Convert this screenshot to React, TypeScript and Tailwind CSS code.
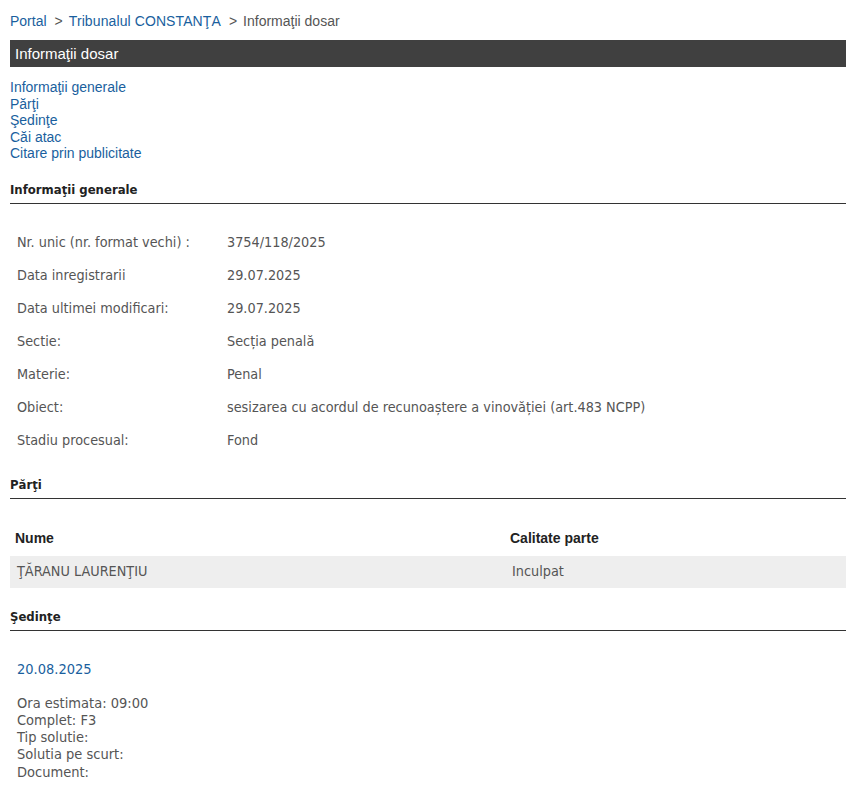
import React from 'react'

const tahoma = "font-['DejaVu_Sans_Condensed',sans-serif]"
const arial = "font-['Liberation_Sans',Arial,sans-serif]"

const general: [string, string][] = [
  ['Nr. unic (nr. format vechi) :', '3754/118/2025'],
  ['Data inregistrarii', '29.07.2025'],
  ['Data ultimei modificari:', '29.07.2025'],
  ['Sectie:', 'Secția penală'],
  ['Materie:', 'Penal'],
  ['Obiect:', 'sesizarea cu acordul de recunoaștere a vinovăției (art.483 NCPP)'],
  ['Stadiu procesual:', 'Fond'],
]

function SectionTitle({ children }: { children: React.ReactNode }) {
  return (
    <div className={`${tahoma} font-bold text-[13px] leading-[16px] text-[#222] border-b border-[#333] pb-[5px]`}>
      {children}
    </div>
  )
}

export default function App() {
  return (
    <div className={`${arial} bg-white w-[855px] min-h-[795px] pl-[10px] pr-[9px] pt-[12px] text-[14px]`}>
      {/* breadcrumb */}
      <div className="leading-[18px] text-[#555]">
        <a className="text-[#1a5f9e]">Portal</a>
        <span className="ml-[8px] mr-[6px]">&gt;</span>
        <a className="text-[#1a5f9e] tracking-[0.1px]">Tribunalul CONSTANŢA</a>
        <span className="ml-[8px] mr-[6px]">&gt;</span>
        <span>Informaţii dosar</span>
      </div>

      <div className="mt-[10px] bg-[#404040] text-white text-[15px] leading-[27px] px-[5px]">
        Informaţii dosar
      </div>

      <div className="mt-[12px] flex flex-col text-[#1a5f9e] leading-[16.5px]">
        <a>Informaţii generale</a>
        <a>Părţi</a>
        <a>Şedinţe</a>
        <a>Căi atac</a>
        <a>Citare prin publicitate</a>
      </div>

      <div className="mt-[20px]">
        <SectionTitle>Informaţii generale</SectionTitle>
      </div>
      <table className={`${tahoma} mt-[23px] text-[14.3px] text-[#555] border-collapse`}>
        <tbody>
          {general.map(([k, v]) => (
            <tr key={k} className="h-[33px]">
              <td className="pl-[7px] w-[217px] align-middle">{k}</td>
              <td className="align-middle">{v}</td>
            </tr>
          ))}
        </tbody>
      </table>

      <div className="mt-[19px]">
        <SectionTitle>Părţi</SectionTitle>
      </div>
      <table className="mt-[23px] w-full border-collapse">
        <thead>
          <tr className="h-[34px]">
            <th className="text-left font-bold text-[#222] pl-[5px] w-[500px]">Nume</th>
            <th className="text-left font-bold text-[#222]">Calitate parte</th>
          </tr>
        </thead>
        <tbody>
          <tr className={`${tahoma} bg-[#eeeeee] h-[32px] text-[14.3px] text-[#555]`}>
            <td className="pl-[7px]">ŢĂRANU LAURENŢIU</td>
            <td className="pl-[2px]">Inculpat</td>
          </tr>
        </tbody>
      </table>

      <div className="mt-[21px]">
        <SectionTitle>Şedinţe</SectionTitle>
      </div>
      <div className={`${tahoma} pl-[7px] mt-[29px] text-[#1a5f9e] text-[14.5px] leading-[18px]`}>20.08.2025</div>
      <div className={`${tahoma} pl-[7px] mt-[17px] text-[#555] text-[14.5px] leading-[17.3px] flex flex-col`}>
        <span>Ora estimata: 09:00</span>
        <span>Complet: F3</span>
        <span>Tip solutie:</span>
        <span>Solutia pe scurt:</span>
        <span>Document:</span>
      </div>
    </div>
  )
}
